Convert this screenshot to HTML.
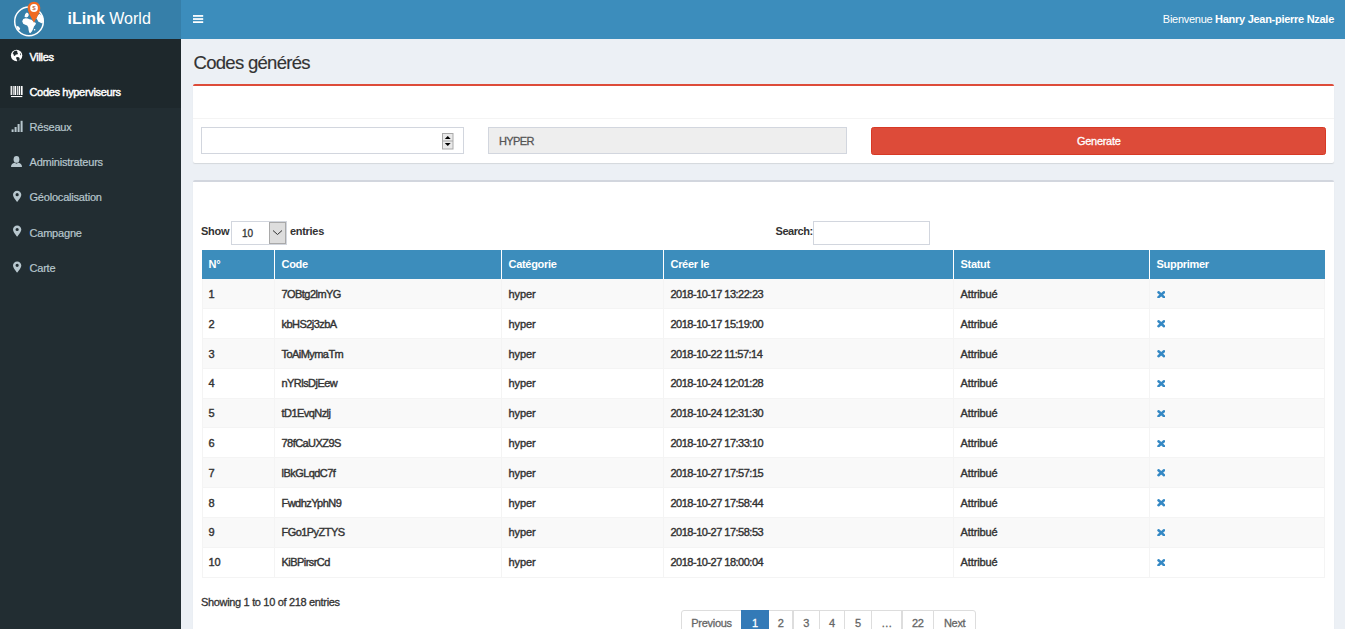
<!DOCTYPE html>
<html><head><meta charset="utf-8">
<style>
*{box-sizing:border-box;margin:0;padding:0}
html,body{width:1345px;height:629px;overflow:hidden;background:#ecf0f5;font-family:"Liberation Sans",sans-serif;color:#333;font-size:11px}
.abs{position:absolute}
#logo{left:0;top:0;width:181px;height:39px;background:#367fa9}
#nav{left:181px;top:0;width:1164px;height:39px;background:#3c8dbc}
#side{left:0;top:39px;width:181px;height:590px;background:#222d32}
#sidetop{left:0;top:39px;width:181px;height:69px;background:#1e282c}
.brand{left:67.5px;top:9px;color:#fff;font-size:16px;letter-spacing:0px;line-height:20px;white-space:nowrap}
.brand b{font-weight:bold}
.mi{left:29.5px;color:#b8c7ce;font-size:11px;line-height:14px;white-space:nowrap;letter-spacing:-0.2px;-webkit-text-stroke:0.2px #b8c7ce}
.mi.w{color:#fff;letter-spacing:-0.33px;-webkit-text-stroke:0.45px #fff}
.ic{left:11px;width:12px;height:12px}
.welcome{right:11px;top:12px;color:#fff;font-size:11px;line-height:14px;white-space:nowrap;letter-spacing:-0.28px}
h1{position:absolute;left:193.5px;top:52px;font-size:18.5px;font-weight:normal;line-height:22px;color:#333;letter-spacing:-0.7px;white-space:nowrap;-webkit-text-stroke:0.15px #333}
.box{background:#fff;border-radius:2px;box-shadow:0 1px 1px rgba(0,0,0,0.1)}
#box1{left:193px;top:84px;width:1141px;height:79px;border-top:2.4px solid #dd4b39}
#box2{left:193px;top:180px;width:1141px;height:460px;border-top:2.4px solid #d2d6de}
.inp{border:1px solid #d2d6de;background:#fff}
.txt{white-space:nowrap;line-height:14px;-webkit-text-stroke:0.3px currentColor}
.txt.b{-webkit-text-stroke:0}
.th{color:#fff;font-weight:bold;white-space:nowrap;line-height:14px;letter-spacing:-0.3px}
.td{white-space:nowrap;line-height:14px;letter-spacing:-0.1px;-webkit-text-stroke:0.4px #333}
.td.code{letter-spacing:-0.55px}
.td.date{letter-spacing:-0.5px}
.pg{position:absolute;top:610px;height:30px;border:1px solid #ddd;background:#fff;color:#666;text-align:center;line-height:25px;font-size:11px;letter-spacing:-0.3px;-webkit-text-stroke:0.3px currentColor}
</style></head><body>
<div class="abs" id="logo"></div>
<div class="abs" id="nav"></div>
<div class="abs" id="side"></div>
<div class="abs" id="sidetop"></div>
<div class="abs" id="content"></div>

<!-- logo -->
<svg class="abs" style="left:0;top:0" width="60" height="39" viewBox="0 0 60 39">
  <circle cx="29" cy="21.4" r="14.3" fill="none" stroke="#fff" stroke-width="1.5"/>
  <path d="M22.2 21.2L23.3 19 25.5 18.2 27.8 18.6 29.5 19.3 31.5 19.8 33 21 34.5 22.2 36 23 35.4 24.8 34 26.5 33.2 28.8 32 31.2 30.3 33.2 29.2 32.5 28.6 30 28.3 27.5 27.2 25.5 25.2 24.8 23.2 23.8z" fill="#fff"/>
  <path d="M24.5 16.8L25.2 14 26.8 12.6 28.2 13.2 28.8 15 28 16.8 26.2 17.5z" fill="#fff"/>
  <path d="M36.5 18.5L37.5 15.5 39.5 13.8 41.8 15.5 43.4 18.5 43.6 21.5 42.2 23.5 40 22.6 38.2 21.2z" fill="#fff"/>
  <path d="M16.3 25.8L18.6 26.5 20.2 28.4 19.4 30.2 17.5 29.5z" fill="#fff"/>
  <circle cx="34.6" cy="29.8" r="0.8" fill="#fff"/>
  <path d="M34 1.8c-3.5 0-6.3 2.8-6.3 6.3 0 4 3.2 8.8 6.3 14.6 3.1-5.8 6.3-10.6 6.3-14.6 0-3.5-2.8-6.3-6.3-6.3z" fill="#f06a22"/>
  <circle cx="34" cy="8" r="3.9" fill="#fff"/>
  <text x="34.1" y="10.3" font-size="6.2" font-family="Liberation Sans" fill="#b84d26" text-anchor="middle">$</text>
</svg>
<div class="abs brand"><b>iLink</b> World</div>

<!-- hamburger -->
<svg class="abs" style="left:193px;top:14px" width="11" height="10" viewBox="0 0 11 10">
  <rect x="0" y="1.05" width="10.2" height="1.75" fill="#fff"/>
  <rect x="0" y="4.15" width="10.2" height="1.75" fill="#fff"/>
  <rect x="0" y="7.25" width="10.2" height="1.75" fill="#fff"/>
</svg>
<div class="abs welcome">Bienvenue <b>Hanry Jean-pierre Nzale</b></div>


<!-- sidebar icons -->
<svg class="abs" style="left:0;top:39px" width="30" height="250" viewBox="0 39 30 250">
  <circle cx="16.6" cy="55.5" r="5.7" fill="#fff"/>
  <path d="M14.2 51.2c1-.5 2.3-.6 3.2-.2l-.4 1.2 1 .8-.6 1.4-1.6.2-.8 1.3-1.2-.4-.4-1.6-.8-.6z" fill="#1e282c"/>
  <path d="M16.2 57.2l1.8-.2 1.4.8.4 1.4-1 1.5-1.4.6-.6-1.6-.6-1.2z" fill="#1e282c"/>
  <path d="M19.8 52.8l1 1.2.2 1.4-.8-.6z" fill="#1e282c"/>
  <g fill="#fff">
    <rect x="10.6" y="86" width="1.3" height="9"/>
    <rect x="12.7" y="86" width="1" height="9"/>
    <rect x="14.4" y="86" width="1.6" height="9"/>
    <rect x="16.8" y="86" width="1" height="9"/>
    <rect x="18.6" y="86" width="1.4" height="9"/>
    <rect x="20.8" y="86" width="1.8" height="9"/>
    <rect x="11" y="96" width="11.3" height="1.1"/>
  </g>
  <g fill="#b8c7ce">
    <rect x="11.6" y="129.4" width="2" height="2.6"/>
    <rect x="14.6" y="127" width="2" height="5"/>
    <rect x="17.6" y="124" width="2" height="8"/>
    <rect x="20.6" y="120.8" width="2" height="11.2"/>
  </g>
  <g fill="#b8c7ce">
    <ellipse cx="16.5" cy="159.4" rx="2.9" ry="3.4"/>
    <path d="M11 167c0-2.6 1.6-4 3.6-4.2l1.9 1 1.9-1c2 .2 3.6 1.6 3.6 4.2z"/>
  </g>
  <g fill="#b8c7ce" fill-rule="evenodd">
    <path d="M17.15 190.8c-2.3 0-4.15 1.8-4.15 4 0 2.6 4.15 7.2 4.15 7.2s4.15-4.6 4.15-7.2c0-2.2-1.85-4-4.15-4zM17.15 193.1a1.6 1.6 0 1 1 0 3.2 1.6 1.6 0 1 1 0-3.2z"/>
    <path d="M17.15 225.6c-2.3 0-4.15 1.8-4.15 4 0 2.6 4.15 7.2 4.15 7.2s4.15-4.6 4.15-7.2c0-2.2-1.85-4-4.15-4zM17.15 227.9a1.6 1.6 0 1 1 0 3.2 1.6 1.6 0 1 1 0-3.2z"/>
    <path d="M17.15 261.4c-2.3 0-4.15 1.8-4.15 4 0 2.6 4.15 7.2 4.15 7.2s4.15-4.6 4.15-7.2c0-2.2-1.85-4-4.15-4zM17.15 263.7a1.6 1.6 0 1 1 0 3.2 1.6 1.6 0 1 1 0-3.2z"/>
  </g>
</svg>
<!-- sidebar menu -->
<div class="abs mi w" style="top:50px">Villes</div>
<div class="abs mi w" style="top:85px">Codes hyperviseurs</div>
<div class="abs mi" style="top:120px">Réseaux</div>
<div class="abs mi" style="top:155px">Administrateurs</div>
<div class="abs mi" style="top:190px">Géolocalisation</div>
<div class="abs mi" style="top:226px">Campagne</div>
<div class="abs mi" style="top:261px">Carte</div>

<h1>Codes générés</h1>

<div class="abs box" id="box1"></div>
<div class="abs box" id="box2"></div>


<!-- box1 contents -->
<div class="abs" style="left:193px;top:118px;width:1141px;height:1px;background:#f4f4f4"></div>
<div class="abs inp" style="left:201px;top:127px;width:263px;height:27px"></div>
<svg class="abs" style="left:442px;top:132.5px" width="12" height="17" viewBox="0 0 12 17">
  <rect x="0.5" y="0.5" width="10.5" height="15.5" fill="#e9e9e9" stroke="#a9a9a9" stroke-width="1"/>
  <line x1="0.5" y1="8" x2="11" y2="8" stroke="#a9a9a9" stroke-width="1"/>
  <path d="M2.8 6L5.75 3 8.7 6z" fill="#000"/>
  <path d="M2.8 10L5.75 13 8.7 10z" fill="#000"/>
</svg>
<div class="abs inp" style="left:488px;top:127px;width:359px;height:27px;background:#eee"></div>
<div class="abs txt" style="left:499px;top:134px;color:#555;letter-spacing:-0.6px">HYPER</div>
<div class="abs" style="left:871px;top:127px;width:455px;height:28px;background:#dd4b39;border:1px solid #d73925;border-radius:2.5px"></div>
<div class="abs txt" style="left:1077px;top:134px;color:#fff;letter-spacing:-0.3px">Generate</div>

<!-- box2 contents -->
<div class="abs txt b" style="left:201px;top:224px;font-weight:bold;letter-spacing:-0.3px">Show</div>
<div class="abs inp" style="left:231px;top:221px;width:56px;height:24px"></div>
<div class="abs" style="left:269px;top:222px;width:17px;height:22px;background:#dddddd;border:1px solid #a9a9a9"></div>
<svg class="abs" style="left:272px;top:229px" width="11" height="7" viewBox="0 0 11 7"><path d="M1 1.5L5.5 5.5 10 1.5" fill="none" stroke="#333" stroke-width="1"/></svg>
<div class="abs txt" style="left:242px;top:226.5px;font-size:10px">10</div>
<div class="abs txt b" style="left:290px;top:224px;font-weight:bold;letter-spacing:-0.3px">entries</div>
<div class="abs txt b" style="left:775.5px;top:224px;font-weight:bold;letter-spacing:-0.45px">Search:</div>
<div class="abs inp" style="left:813px;top:221px;width:117px;height:24px"></div>
<div class="abs" style="left:201.5px;top:250px;width:1123.5px;height:29px;background:#3c8dbc"></div>
<div class="abs th" style="left:208.5px;top:257px">N°</div>
<div class="abs th" style="left:281.5px;top:257px">Code</div>
<div class="abs th" style="left:508.5px;top:257px">Catégorie</div>
<div class="abs th" style="left:670.5px;top:257px">Créer le</div>
<div class="abs th" style="left:960.5px;top:257px">Statut</div>
<div class="abs th" style="left:1156.5px;top:257px">Supprimer</div>
<div class="abs" style="left:274.0px;top:250px;width:1px;height:29px;background:#fff"></div>
<div class="abs" style="left:501.0px;top:250px;width:1px;height:29px;background:#fff"></div>
<div class="abs" style="left:663.0px;top:250px;width:1px;height:29px;background:#fff"></div>
<div class="abs" style="left:953.0px;top:250px;width:1px;height:29px;background:#fff"></div>
<div class="abs" style="left:1149.0px;top:250px;width:1px;height:29px;background:#fff"></div>
<div class="abs" style="left:201.5px;top:279.0px;width:1123.5px;height:29.9px;background:#f9f9f9;border-bottom:1px solid #f4f4f4"></div>
<div class="abs td num" style="left:208.5px;top:287.0px">1</div>
<div class="abs td code" style="left:281.5px;top:287.0px">7OBtg2lmYG</div>
<div class="abs td" style="left:508.5px;top:287.0px">hyper</div>
<div class="abs td date" style="left:670.5px;top:287.0px">2018-10-17 13:22:23</div>
<div class="abs td" style="left:960.5px;top:287.0px">Attribué</div>
<svg class="abs" style="left:1156.8px;top:290.5px" width="8.5" height="7.5" viewBox="0 0 8.5 7.5"><path d="M1.5 1.3L7 6.2M7 1.3L1.5 6.2" stroke="#3488c4" stroke-width="2.5" stroke-linecap="round"/></svg>
<div class="abs" style="left:201.5px;top:308.9px;width:1123.5px;height:29.9px;background:#fff;border-bottom:1px solid #f4f4f4"></div>
<div class="abs td num" style="left:208.5px;top:316.8px">2</div>
<div class="abs td code" style="left:281.5px;top:316.8px">kbHS2j3zbA</div>
<div class="abs td" style="left:508.5px;top:316.8px">hyper</div>
<div class="abs td date" style="left:670.5px;top:316.8px">2018-10-17 15:19:00</div>
<div class="abs td" style="left:960.5px;top:316.8px">Attribué</div>
<svg class="abs" style="left:1156.8px;top:320.3px" width="8.5" height="7.5" viewBox="0 0 8.5 7.5"><path d="M1.5 1.3L7 6.2M7 1.3L1.5 6.2" stroke="#3488c4" stroke-width="2.5" stroke-linecap="round"/></svg>
<div class="abs" style="left:201.5px;top:338.8px;width:1123.5px;height:29.9px;background:#f9f9f9;border-bottom:1px solid #f4f4f4"></div>
<div class="abs td num" style="left:208.5px;top:346.6px">3</div>
<div class="abs td code" style="left:281.5px;top:346.6px">ToAiMymaTm</div>
<div class="abs td" style="left:508.5px;top:346.6px">hyper</div>
<div class="abs td date" style="left:670.5px;top:346.6px">2018-10-22 11:57:14</div>
<div class="abs td" style="left:960.5px;top:346.6px">Attribué</div>
<svg class="abs" style="left:1156.8px;top:350.1px" width="8.5" height="7.5" viewBox="0 0 8.5 7.5"><path d="M1.5 1.3L7 6.2M7 1.3L1.5 6.2" stroke="#3488c4" stroke-width="2.5" stroke-linecap="round"/></svg>
<div class="abs" style="left:201.5px;top:368.7px;width:1123.5px;height:29.9px;background:#fff;border-bottom:1px solid #f4f4f4"></div>
<div class="abs td num" style="left:208.5px;top:376.4px">4</div>
<div class="abs td code" style="left:281.5px;top:376.4px">nYRlsDjEew</div>
<div class="abs td" style="left:508.5px;top:376.4px">hyper</div>
<div class="abs td date" style="left:670.5px;top:376.4px">2018-10-24 12:01:28</div>
<div class="abs td" style="left:960.5px;top:376.4px">Attribué</div>
<svg class="abs" style="left:1156.8px;top:379.9px" width="8.5" height="7.5" viewBox="0 0 8.5 7.5"><path d="M1.5 1.3L7 6.2M7 1.3L1.5 6.2" stroke="#3488c4" stroke-width="2.5" stroke-linecap="round"/></svg>
<div class="abs" style="left:201.5px;top:398.6px;width:1123.5px;height:29.9px;background:#f9f9f9;border-bottom:1px solid #f4f4f4"></div>
<div class="abs td num" style="left:208.5px;top:406.2px">5</div>
<div class="abs td code" style="left:281.5px;top:406.2px">tD1EvqNzlj</div>
<div class="abs td" style="left:508.5px;top:406.2px">hyper</div>
<div class="abs td date" style="left:670.5px;top:406.2px">2018-10-24 12:31:30</div>
<div class="abs td" style="left:960.5px;top:406.2px">Attribué</div>
<svg class="abs" style="left:1156.8px;top:409.7px" width="8.5" height="7.5" viewBox="0 0 8.5 7.5"><path d="M1.5 1.3L7 6.2M7 1.3L1.5 6.2" stroke="#3488c4" stroke-width="2.5" stroke-linecap="round"/></svg>
<div class="abs" style="left:201.5px;top:428.5px;width:1123.5px;height:29.9px;background:#fff;border-bottom:1px solid #f4f4f4"></div>
<div class="abs td num" style="left:208.5px;top:436.0px">6</div>
<div class="abs td code" style="left:281.5px;top:436.0px">78fCaUXZ9S</div>
<div class="abs td" style="left:508.5px;top:436.0px">hyper</div>
<div class="abs td date" style="left:670.5px;top:436.0px">2018-10-27 17:33:10</div>
<div class="abs td" style="left:960.5px;top:436.0px">Attribué</div>
<svg class="abs" style="left:1156.8px;top:439.5px" width="8.5" height="7.5" viewBox="0 0 8.5 7.5"><path d="M1.5 1.3L7 6.2M7 1.3L1.5 6.2" stroke="#3488c4" stroke-width="2.5" stroke-linecap="round"/></svg>
<div class="abs" style="left:201.5px;top:458.4px;width:1123.5px;height:29.9px;background:#f9f9f9;border-bottom:1px solid #f4f4f4"></div>
<div class="abs td num" style="left:208.5px;top:465.8px">7</div>
<div class="abs td code" style="left:281.5px;top:465.8px">lBkGLqdC7f</div>
<div class="abs td" style="left:508.5px;top:465.8px">hyper</div>
<div class="abs td date" style="left:670.5px;top:465.8px">2018-10-27 17:57:15</div>
<div class="abs td" style="left:960.5px;top:465.8px">Attribué</div>
<svg class="abs" style="left:1156.8px;top:469.3px" width="8.5" height="7.5" viewBox="0 0 8.5 7.5"><path d="M1.5 1.3L7 6.2M7 1.3L1.5 6.2" stroke="#3488c4" stroke-width="2.5" stroke-linecap="round"/></svg>
<div class="abs" style="left:201.5px;top:488.3px;width:1123.5px;height:29.9px;background:#fff;border-bottom:1px solid #f4f4f4"></div>
<div class="abs td num" style="left:208.5px;top:495.6px">8</div>
<div class="abs td code" style="left:281.5px;top:495.6px">FwdhzYphN9</div>
<div class="abs td" style="left:508.5px;top:495.6px">hyper</div>
<div class="abs td date" style="left:670.5px;top:495.6px">2018-10-27 17:58:44</div>
<div class="abs td" style="left:960.5px;top:495.6px">Attribué</div>
<svg class="abs" style="left:1156.8px;top:499.1px" width="8.5" height="7.5" viewBox="0 0 8.5 7.5"><path d="M1.5 1.3L7 6.2M7 1.3L1.5 6.2" stroke="#3488c4" stroke-width="2.5" stroke-linecap="round"/></svg>
<div class="abs" style="left:201.5px;top:518.2px;width:1123.5px;height:29.9px;background:#f9f9f9;border-bottom:1px solid #f4f4f4"></div>
<div class="abs td num" style="left:208.5px;top:525.4px">9</div>
<div class="abs td code" style="left:281.5px;top:525.4px">FGo1PyZTYS</div>
<div class="abs td" style="left:508.5px;top:525.4px">hyper</div>
<div class="abs td date" style="left:670.5px;top:525.4px">2018-10-27 17:58:53</div>
<div class="abs td" style="left:960.5px;top:525.4px">Attribué</div>
<svg class="abs" style="left:1156.8px;top:528.9px" width="8.5" height="7.5" viewBox="0 0 8.5 7.5"><path d="M1.5 1.3L7 6.2M7 1.3L1.5 6.2" stroke="#3488c4" stroke-width="2.5" stroke-linecap="round"/></svg>
<div class="abs" style="left:201.5px;top:548.1px;width:1123.5px;height:29.9px;background:#fff;border-bottom:1px solid #f4f4f4"></div>
<div class="abs td num" style="left:208.5px;top:555.2px">10</div>
<div class="abs td code" style="left:281.5px;top:555.2px">KiBPirsrCd</div>
<div class="abs td" style="left:508.5px;top:555.2px">hyper</div>
<div class="abs td date" style="left:670.5px;top:555.2px">2018-10-27 18:00:04</div>
<div class="abs td" style="left:960.5px;top:555.2px">Attribué</div>
<svg class="abs" style="left:1156.8px;top:558.7px" width="8.5" height="7.5" viewBox="0 0 8.5 7.5"><path d="M1.5 1.3L7 6.2M7 1.3L1.5 6.2" stroke="#3488c4" stroke-width="2.5" stroke-linecap="round"/></svg>
<div class="abs" style="left:201.5px;top:279px;width:1px;height:299.0px;background:#f4f4f4"></div>
<div class="abs" style="left:1324px;top:279px;width:1px;height:299.0px;background:#f4f4f4"></div>
<div class="abs" style="left:274.0px;top:279px;width:1px;height:299.0px;background:#f4f4f4"></div>
<div class="abs" style="left:501.0px;top:279px;width:1px;height:299.0px;background:#f4f4f4"></div>
<div class="abs" style="left:663.0px;top:279px;width:1px;height:299.0px;background:#f4f4f4"></div>
<div class="abs" style="left:953.0px;top:279px;width:1px;height:299.0px;background:#f4f4f4"></div>
<div class="abs" style="left:1149.0px;top:279px;width:1px;height:299.0px;background:#f4f4f4"></div>
<div class="abs txt" style="left:201px;top:595px;letter-spacing:-0.33px">Showing 1 to 10 of 218 entries</div>
<div class="pg" style="left:680.7px;width:61.7px;border-radius:3px 0 0 3px;">Previous</div>
<div class="pg" style="left:741.4px;width:27.2px;background:#337ab7;border-color:#337ab7;color:#fff;z-index:2;">1</div>
<div class="pg" style="left:767.6px;width:25.9px;">2</div>
<div class="pg" style="left:792.5px;width:27.2px;">3</div>
<div class="pg" style="left:818.7px;width:26.7px;">4</div>
<div class="pg" style="left:844.4px;width:27.2px;">5</div>
<div class="pg" style="left:870.6px;width:31.9px;">…</div>
<div class="pg" style="left:901.5px;width:32.5px;">22</div>
<div class="pg" style="left:933.0px;width:43.3px;border-radius:0 3px 3px 0;">Next</div>
</body></html>
